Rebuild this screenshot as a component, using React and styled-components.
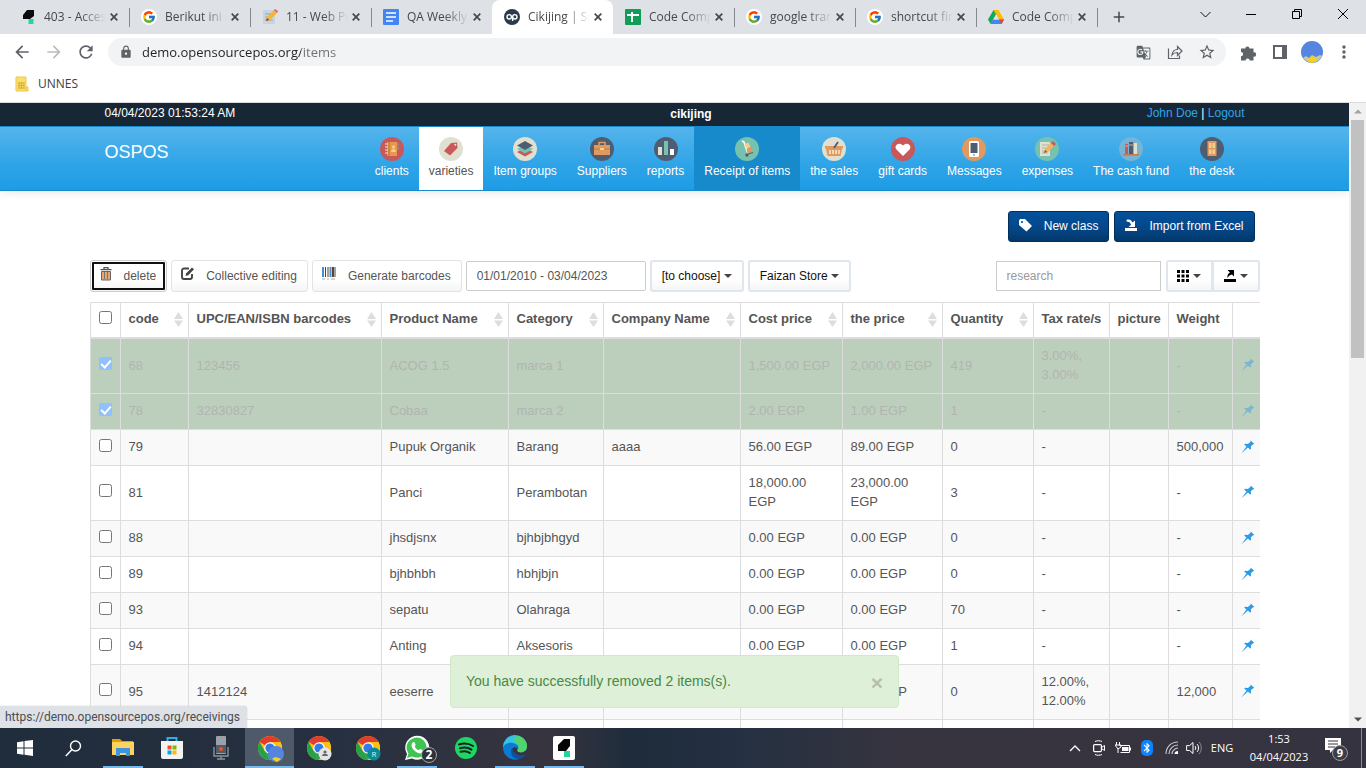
import React from "react";
import styled, { createGlobalStyle, css } from "styled-components";
import { FcGoogle } from "react-icons/fc";
import { FaWhatsapp } from "react-icons/fa";
import {
  MdArrowBack, MdArrowForward, MdRefresh, MdLock, MdGTranslate, MdStarBorder,
  MdExtension, MdMoreVert, MdAdd, MdBluetooth,
} from "react-icons/md";

const GlobalStyle = createGlobalStyle`
  * { box-sizing: border-box; }
  body { margin: 0; background: #fff; font-family: "Liberation Sans", Arial, sans-serif; font-size: 13px; line-height: 19px; color: #555; }
  button, input, select { font: inherit; color: inherit; margin: 0; }
  button { cursor: pointer; }
  svg { display: block; flex: none; }
`;

const uiFont = css`font-family: "Open Sans", "Noto Sans", sans-serif;`;

const Screen = styled.div`
  display: flex;
  flex-direction: column;
  height: 100vh;
  overflow: hidden;
`;

/* ---------- browser ---------- */
const TabStrip = styled.div`
  ${uiFont}
  display: flex;
  align-items: stretch;
  height: 34px;
  flex: none;
  padding-left: 8px;
  background: #dee1e6;
  font-size: 12px;
  line-height: 16px;
  color: #45494d;
`;
const Tab = styled.div`
  position: relative;
  display: flex;
  align-items: center;
  width: 121px;
  padding: 0 7px 0 12px;
  background: ${(p) => (p.$active ? "#fff" : "transparent")};
  border-radius: 8px 8px 0 0;
  &::after {
    content: "";
    position: absolute;
    right: -1px;
    top: 8px;
    width: 1px;
    height: 19px;
    background: ${(p) => (p.$line ? "#85888d" : "transparent")};
  }
`;
const TabTitle = styled.button`
  display: flex;
  align-items: center;
  gap: 8px;
  flex: 1;
  min-width: 0;
  padding: 0;
  border: 0;
  background: none;
  text-align: left;
`;
const TabText = styled.span`
  flex: 1;
  overflow: hidden;
  white-space: nowrap;
  mask-image: linear-gradient(to right, #000 60%, transparent);
`;
const GhostButton = styled.button`
  display: flex;
  align-items: center;
  justify-content: center;
  width: ${(p) => p.$w || 16}px;
  height: ${(p) => p.$h || 16}px;
  flex: none;
  padding: 0;
  border: 0;
  background: none;
  color: ${(p) => p.$color || "#45494d"};
`;
const WindowButtons = styled.div`
  display: flex;
  align-items: center;
  margin-left: auto;
  height: 28px;
`;
const Toolbar = styled.div`
  display: flex;
  align-items: center;
  height: 36px;
  flex: none;
  padding: 0 2px 0 6px;
`;
const Omnibox = styled.div`
  display: flex;
  align-items: center;
  flex: 1;
  height: 28px;
  margin: 0 10px 0 6px;
  padding: 0 3px 0 11px;
  border-radius: 14px;
  background: #f1f3f4;
  color: #5f6368;
`;
const Address = styled.input`
  ${uiFont}
  flex: 1;
  min-width: 0;
  margin-left: 9px;
  padding: 0;
  border: 0;
  outline: 0;
  font-size: 13px;
  color: #202124;
  background: linear-gradient(to right, #202124 159px, #6c7075 159px);
  background-clip: text;
  -webkit-text-fill-color: transparent;
`;
const Bookmarks = styled.div`
  ${uiFont}
  display: flex;
  align-items: center;
  height: 33px;
  flex: none;
  padding: 0 14px 5px;
  border-bottom: 1px solid #dadce0;
  font-size: 12px;
`;
const Bookmark = styled.a`
  display: flex;
  align-items: center;
  gap: 8px;
  color: #3c4043;
  text-decoration: none;
`;
const Viewport = styled.div`
  position: relative;
  display: flex;
  flex: 1;
  min-height: 0;
  overflow: hidden;
`;
const Scrollbar = styled.div`
  display: flex;
  flex-direction: column;
  align-items: center;
  width: 17px;
  flex: none;
  background: #f1f1f1;
`;
const Thumb = styled.div`
  width: 13px;
  flex: 0 0 38%;
  margin-bottom: auto;
  background: #c1c1c1;
`;
const StatusBubble = styled.div`
  font-family: Roboto, "Open Sans", sans-serif;
  position: absolute;
  left: 0;
  bottom: 0;
  padding: 1px 7px 1px 5px;
  height: 22px;
  border-radius: 0 4px 0 0;
  background: #dee1e6;
  font-size: 12px;
  line-height: 20px;
  color: #4a4d51;
  box-shadow: 0 0 1px #9a9da1;
`;

/* ---------- site ---------- */
const Page = styled.div`
  flex: 1;
  min-width: 0;
  overflow: hidden;
`;
const Container = styled.div`
  display: flex;
  justify-content: space-between;
  max-width: 1170px;
  margin: 0 auto;
  padding: 0 15px;
`;
const TopBar = styled.div`
  height: 23px;
  background: #182736;
  color: #fff;
  font-size: 12px;
  line-height: 20px;
  strong { line-height: 22px; }
  a { color: #2fa4e7; text-decoration: none; }
`;
const NavBar = styled.header`
  border: 1px solid #178acc;
  border-width: 1px 0;
  background: linear-gradient(#54b4eb, #2fa4e7 60%, #1d9ce5);
  box-shadow: 0 1px 10px rgba(0, 0, 0, 0.1);
`;
const Brand = styled.a`
  color: #fff;
  font-size: 18px;
  line-height: 50px;
  text-decoration: none;
`;
const Nav = styled.nav`display: flex;`;
const NavItem = styled.a`
  display: flex;
  flex-direction: column;
  align-items: center;
  gap: 1px;
  padding: 10px 10px 9px;
  font-size: 12px;
  text-decoration: none;
  white-space: nowrap;
  color: ${(p) => (p.$state === "active" ? "#555" : "#fff")};
  background: ${(p) => ({ active: "#fff", hover: "#178acc" }[p.$state] || "transparent")};
`;
const Main = styled.main`
  max-width: 1170px;
  margin: 0 auto;
  padding-top: 20px;
`;
const Actions = styled.div`
  display: flex;
  justify-content: flex-end;
  gap: 5px;
  padding-right: 5px;
`;
const PrimaryButton = styled.button`
  display: flex;
  align-items: center;
  gap: 12px;
  height: 31px;
  padding: 0 10px;
  border: 1px solid #022f5a;
  border-radius: 3px;
  background: linear-gradient(#04519b, #044687 60%, #033769);
  color: #fff;
  font-size: 12px;
  svg { margin-bottom: 3px; }
`;
const Tools = styled.div`
  display: flex;
  align-items: center;
  gap: 4px;
  margin: 18px 0 10px;
`;
const button = css`
  display: flex;
  align-items: center;
  height: 32px;
  border: 1px solid #e1e3e5;
  border-radius: 3px;
  background: linear-gradient(#fff, #fff 60%, #f5f5f5);
  font-size: 12px;
  white-space: nowrap;
`;
const ToolButton = styled.button`
  ${button}
  gap: 12px;
  padding: 0 10px 0 9px;
  svg { margin-bottom: 5px; }
  ${(p) => p.$focused && css`
    border-color: #ccc;
    outline: 2px solid #101010;
    outline-offset: -4px;
  `}
`;
const TextField = styled.input`
  width: ${(p) => p.$w}px;
  height: 30px;
  padding: 0 10px;
  border: 1px solid #ccc;
  border-radius: ${(p) => p.$radius}px;
  background: #fff;
  font-size: 12px;
  outline: 0;
  &::placeholder { color: #999; }
`;
const Picker = styled.label`
  position: relative;
  svg { position: absolute; right: 12px; top: 14px; pointer-events: none; }
`;
const Select = styled.select`
  ${button}
  width: ${(p) => p.$w}px;
  padding: 0 11px 0 10px;
  border: 2px solid #dfe6ee;
  color: #111;
  appearance: none;
`;
const Spacer = styled.div`flex: 1;`;
const ButtonGroup = styled.div`
  display: flex;
  margin-left: 1px;
`;
const IconMenuButton = styled.button`
  ${button}
  justify-content: center;
  gap: 4px;
  width: 47px;
  padding: 0;
  border: 2px solid #dfe6ee;
  color: #000;
  border-radius: 3px 0 0 3px;
  & + & { margin-left: -1px; width: 48px; border-radius: 0 3px 3px 0; }
`;
const TableClip = styled.div`overflow: hidden;`;
const Table = styled.table`
  table-layout: fixed;
  width: 1180px;
  border-collapse: separate;
  border-spacing: 0;
  border-top: 1px solid #ddd;
  text-align: left;
`;
const HeadCell = styled.th`
  padding: 6px 7px 9px 8px;
  border-left: 1px solid #ddd;
  border-bottom: 2px solid #ddd;
  white-space: nowrap;
`;
const HeadInner = styled.div`
  display: flex;
  align-items: center;
  justify-content: space-between;
  margin-right: -2px;
  svg { margin-top: 2px; }
`;
const Row = styled.tr`
  background: #fff;
  &:nth-child(odd) { background: #f9f9f9; }
  ${(p) => p.$removed && css`
    &, &:nth-child(odd) { background: #bccfbc; color: #b1b4b1; }
    svg { opacity: 0.45; }
  `}
`;
const Cell = styled.td`
  padding: 7px 7px 9px 8px;
  border-left: 1px solid #ddd;
  border-bottom: 1px solid #ddd;
  vertical-align: middle;
`;
const Check = styled.input`
  display: block;
  width: 13px;
  height: 13px;
  margin: 0 0 3px;
  ${(p) => p.$faded && css`
    appearance: none;
    border-radius: 2px;
    background: #8fc1ff;
    &::after {
      content: "";
      display: block;
      width: 4px;
      height: 8px;
      margin: 1px 0 0 4px;
      border: solid #fff;
      border-width: 0 2px 2px 0;
      transform: rotate(42deg);
    }
  `}
`;
const Toast = styled.div`
  position: absolute;
  left: 450px;
  bottom: 20px;
  display: flex;
  align-items: center;
  justify-content: space-between;
  width: 449px;
  height: 53px;
  padding: 0 15px;
  border: 1px solid #d0e9c6;
  border-radius: 4px;
  background: #dff0d8;
  color: #468847;
  font-size: 14px;
`;
const ToastClose = styled.button`
  padding: 2px 0 0;
  border: 0;
  background: none;
  color: #b2c0ad;
  font-size: 21px;
  font-weight: bold;
`;

/* ---------- taskbar ---------- */
const Taskbar = styled.footer`
  ${uiFont}
  display: flex;
  align-items: stretch;
  height: 40px;
  flex: none;
  background: linear-gradient(to right, #202d3c, #273040 25%, #37343f 40%, #1f2c3c 46%, #243041 54%, #37343f 66%, #353340);
  color: #fff;
  font-size: 12px;
  line-height: 18px;
`;
const TaskButton = styled.button`
  display: flex;
  align-items: center;
  justify-content: center;
  width: 49px;
  padding: 0;
  border: 0;
  background: ${(p) => (p.$active ? "#4e5a6a" : "none")};
  box-shadow: ${(p) => (p.$active ? "inset 0 -2px #76b9ed" : "none")};
  ${(p) => p.$open && css`
    background: linear-gradient(#76b9ed, #76b9ed) center bottom / 40px 2px no-repeat;
  `}
  svg { overflow: visible; }
`;
const Tray = styled.div`
  display: flex;
  align-items: center;
  margin-left: auto;
  padding-right: 4px;
`;
const Clock = styled.time`
  width: 74px;
  margin: 0 5px 0 2px;
  text-align: center;
  font-size: 11px;
`;
const Language = styled.span`
  width: 36px;
  text-align: center;
  font-size: 11px;
`;
const DesktopEdge = styled.div`
  align-self: stretch;
  width: 1px;
  margin-left: 8px;
  background: #8a8993;
`;

/* ---------- small drawings ---------- */
const Svg = ({ w = 16, h = w, box = `0 0 ${w} ${h}`, children, ...rest }) => (
  <svg width={w} height={h} viewBox={box} fill="none" aria-hidden="true" {...rest}>{children}</svg>
);
const Caret = () => <Svg w={8} h={4}><path d="M0 0h8L4 4z" fill="#444" /></Svg>;
const Sort = () => <Svg w={9} h={15}><path d="M0 7l4.500-7L9 7zM0 8.500h9L4.500 15z" fill="#ddd" /></Svg>;
const PathMark = () => (
  <Svg><path d="M7 1h7v6l-4 3H3V6z" fill="#0b0b0b" /><path d="M8.500 10h5v5h-5z" fill="#21d79c" /></Svg>
);
const GoogleMark = () => <Svg><circle cx="8" cy="8" r="8" fill="#fff" /><FcGoogle x="1" y="1" width="14" height="14" size={14} /></Svg>;
const MemoMark = () => (
  <Svg><path d="M1 1h12v14H1z" fill="#c5d5e2" /><path d="M3 5h7M3 8h5M3 11h8" stroke="#91a9bb" />
    <path d="M4 12l1-4 7-7 3 3-7 7z" fill="#f8b534" /><path d="M12 1l1-1 3 2-1 2z" fill="#e35d6a" /><path d="M4 12l1-3 2 2z" fill="#634a2e" /></Svg>
);
const DocsMark = () => <Svg><rect width="16" height="16" rx="1" fill="#4285f4" /><path d="M3 4h10M3 8h10M3 12h7" stroke="#fff" strokeWidth="1.600" /></Svg>;
const OpMark = () => (
  <Svg><circle cx="8" cy="8" r="8" fill="#2a3b4f" /><circle cx="5.200" cy="7.800" r="2.200" stroke="#fff" strokeWidth="1.400" />
    <circle cx="10.800" cy="7.800" r="2.200" stroke="#fff" strokeWidth="1.400" /><path d="M8.600 7.500V12" stroke="#fff" strokeWidth="1.400" /></Svg>
);
const SheetsMark = () => <Svg><rect width="16" height="16" rx="1" fill="#0f9d58" /><path d="M2 6h12M7 3v10" stroke="#fff" strokeWidth="2" /></Svg>;
const DriveMark = () => (
  <Svg><path d="M5.500 1h5L5 11l-2.500 4L0 10.500z" fill="#12a85d" /><path d="M5.500 1h5L16 10.500h-5z" fill="#fbbc04" />
    <path d="M5 10.500h11L13.500 15h-11z" fill="#4285f4" /><path d="M11 10.500h5L13.500 15z" fill="#ea4335" /><path d="M8 5.500l2.800 5H5.200z" fill="#dee1e6" /></Svg>
);
const CloseMark = () => <Svg w={8}><path d="M.700.700l6.600 6.600M7.300.700L.700 7.300" stroke="#45494d" strokeWidth="1.700" /></Svg>;
const Avatar = ({ w = 22 }) => (
  <Svg w={w} box="0 0 22 22"><circle cx="11" cy="11" r="11" fill="#5585df" />
    <path d="M2 17l3-2 3 2 3-3 4 2 4-2 2 1a11 11 0 0 1-18 3z" fill="#c9c8a2" /><path d="M7 18l4-3 4 2 1 3-5 2-4-1z" fill="#f4d11d" /></Svg>
);
const Chrome = ({ children }) => (
  <Svg w={24}><circle cx="12" cy="12" r="12" fill="#fbc117" /><path d="M12 12L1.600 6A12 12 0 0 1 22.400 6H12z" fill="#e33b2e" />
    <path d="M1.600 6L7 15.500l5 8.500A12 12 0 0 1 1.600 6z" fill="#25a04b" /><path d="M12 24l5.500-9L12 12l-5 3.500z" fill="#25a04b" />
    <path d="M22.400 6H12l5.500 9L12 24A12 12 0 0 0 22.400 6z" fill="#fbc117" /><circle cx="12" cy="12" r="5.800" fill="#fff" /><circle cx="12" cy="12" r="4.600" fill="#3679e8" />
    {children}</Svg>
);

const Tag = () => <Svg w={13}><path d="M0 1.500L1 0h5l7 7-5.500 5.500L0 6z" fill="#fff" /><circle cx="3" cy="3" r="1.100" fill="#044f97" /></Svg>;
const Import = () => <Svg w={12} h={13}><path d="M0 9h12v3H0z" fill="#fff" /><path d="M1.500 1C4 0 6.500 1 7.500 3.500L10 1.500V8H3.500L6 5.700C5.300 3.500 4 2.500 1.500 2.500z" fill="#fff" /></Svg>;
const Export = () => <Svg w={12} h={13}><path d="M0 9h12v3H0z" fill="#000" /><path d="M3.500 0H10v6.500L8 4.600C6 5 5 6 3.500 8c-.500-2.500.700-4.500 2.500-5.400z" fill="#000" /></Svg>;
const Trash = () => (
  <Svg w={12} h={14}><path d="M4 2V.7h4V2M.500 2.700h11" stroke="#555" strokeWidth="1.300" /><path d="M1.500 4.500h9V13h-9z" fill="#e7a66f" stroke="#666" /><path d="M4.500 5v7M7.500 5v7" stroke="#777" /></Svg>
);
const Edit = () => (
  <Svg w={13} h={13}><path d="M8 1.500H3A2 2 0 0 0 1 3.500V10a2 2 0 0 0 2 2h6a2 2 0 0 0 2-2V7" stroke="#444" strokeWidth="1.900" /><path d="M4.500 9l.7-2.800L11 .5 13 2.300 7.300 8.200z" fill="#444" /></Svg>
);
const Barcode = () => (
  <Svg w={14} h={13}><path d="M1 0v10M8.500 0v10" stroke="#4a8fc9" strokeWidth="2" /><path d="M3.500 0v10M13 0v10M6 0v10" stroke="#4d4440" /><path d="M11 0v10" stroke="#5a4632" strokeWidth="2" /><path d="M0 12h3M5 12h2M9 12h4" stroke="#aaa" /></Svg>
);
const Grid = () => <Svg w={12} h={12}><path d="M0 0h3v3H0zM4.500 0h3v3h-3zM9 0h3v3H9zM0 4.500h3v3H0zM4.500 4.500h3v3h-3zM9 4.500h3v3H9zM0 9h3v3H0zM4.500 9h3v3h-3zM9 9h3v3H9z" fill="#000" /></Svg>;
const Pin = () => (
  <Svg w={14} h={14}><path d="M9.600.600L13.400 4l-1.200.300-2.400 2 .300 2.600-.900.700-2.300-2L.300 13.600 5.500 6.500 3.200 4.600l.900-.800 2.800.200 2.700-2.300z" fill="#2a9be6" /></Svg>
);

const badge = {
  clients: ["#c9585b", <><path d="M7 5h10v14H7z" fill="#e6994f" /><path d="M9 5v14" stroke="#b76c35" /><circle cx="13.500" cy="10" r="1.600" fill="#f6cf86" /><path d="M11 15c0-4 5-4 5 0z" fill="#f6cf86" /><path d="M5 7h3M5 10h3M5 13h3M5 16h3" stroke="#f0e6cf" /><path d="M18 6v3M18 10v3" stroke="#62b5a2" /></>],
  varieties: ["#e0e0d1", <><path d="M5 14l7-8 6-.5.500 5.500-7.500 7.500z" fill="#c9585b" /><circle cx="16.300" cy="7.700" r="1" fill="#f4e9e3" /></>],
  groups: ["#e0e0d1", <><path d="M4 15l8 4.500 8-4.500-3-1.500H7z" fill="#c9585b" /><path d="M4 12l8 4.500 8-4.500-3-1.500H7z" fill="#76c2af" /><path d="M4 8.500L12 4l8 4.500-8 4.500z" fill="#4f5d73" /></>],
  suppliers: ["#4f5d73", <><path d="M9 8V5.500h6V8" stroke="#e0995e" strokeWidth="1.600" /><path d="M4 8h16v10H4z" fill="#e0995e" /><path d="M4 12h16" stroke="#c47b43" /><path d="M10 11h4v2h-4z" fill="#f5cf87" /></>],
  reports: ["#4f5d73", <><path d="M4 10h4v8H4z" fill="#e0e0d1" /><path d="M10 4h4v14h-4z" fill="#76c2af" /><path d="M16 12h4v6h-4z" fill="#fff" /></>],
  receipt: ["#76c2af", <><path d="M7 4l2 1 4 12" stroke="#fff" strokeWidth="1.600" /><path d="M9.500 7l4-1.500 2 4.500-4 1.500z" fill="#f5cf87" /><path d="M11.500 12l5-1.500 1.500 4-5.500 2z" fill="#e0995e" /><path d="M13 17l5-1.500" stroke="#4f5d73" /><circle cx="12" cy="18" r="1.700" fill="#4f5d73" /></>],
  sales: ["#e0e0d1", <><path d="M3 9h18v2l-1 1-1.500 7h-13L4 12l-1-1z" fill="#e0995e" /><path d="M8 13v4M11 13v4M14 13v4M17 13v4" stroke="#fff2df" strokeWidth="1.400" /><path d="M12 11l4-6" stroke="#4f5d73" strokeWidth="1.800" /></>],
  gift: ["#c9585b", <path d="M12 19L5.500 12.500C2.500 9 7.500 4 12 8.500 16.500 4 21.500 9 18.500 12.500z" fill="#fff" />],
  messages: ["#e0995e", <><rect x="7" y="4" width="10" height="16" rx="1.500" fill="#fff" /><path d="M8.500 6h7v10h-7z" fill="#4f5d73" /><circle cx="12" cy="18" r=".9" fill="#999" /></>],
  expenses: ["#76c2af", <><path d="M5 5h10v14H5z" fill="#e0e0d1" /><path d="M7 8h7M7 11h4M7 14h2M7 16h6" stroke="#aeb3a5" /><path d="M9 16l1-4 7-7 3 3-7 7z" fill="#f5b25e" /><path d="M16 6l2-2 3 3-2 2z" fill="#c9585b" /><path d="M9 16l1-3 2 2z" fill="#4f5d73" /></>],
  fund: ["#77b3d4", <><path d="M6 7h3v10H6z" fill="#c9585b" /><path d="M10 5h4v12h-4z" fill="#4f5d73" /><path d="M15 6h3v11h-3z" fill="#e0e0d1" /><path d="M6 9h3M10 8h4" stroke="#e7a66f" /><path d="M4 17h16v1.500H4z" fill="#c47b43" /></>],
  desk: ["#4f5d73", <><path d="M7.500 4h9v15h-9z" fill="#e0995e" /><path d="M9 6h2.500v5H9zM12.500 6H15v5h-2.500zM9 12.500h2.500V17H9zM12.500 12.500H15V17h-2.500z" fill="#f5cf87" /></>],
};
const Badge = ({ name }) => <Svg w={24}><circle cx="12" cy="12" r="12" fill={badge[name][0]} />{badge[name][1]}</Svg>;

/* ---------- data ---------- */
const tabs = [
  [PathMark, "403 - Access Denied"], [GoogleMark, "Berikut ini adalah"], [MemoMark, "11 - Web Project"],
  [DocsMark, "QA Weekly Report"], [OpMark, "Cikijing | Supported", true], [SheetsMark, "Code Competition"],
  [GoogleMark, "google translate"], [GoogleMark, "shortcut firefox"], [DriveMark, "Code Competition"],
];
const nav = [
  ["clients", "clients"], ["varieties", "varieties", "active"], ["groups", "Item groups"], ["suppliers", "Suppliers"],
  ["reports", "reports"], ["receipt", "Receipt of items", "hover"], ["sales", "the sales"], ["gift", "gift cards"],
  ["messages", "Messages"], ["expenses", "expenses"], ["fund", "The cash fund"], ["desk", "the desk"],
];
const columns = [
  ["code", 68, 1], ["UPC/EAN/ISBN barcodes", 193, 1], ["Product Name", 127, 1], ["Category", 95, 1],
  ["Company Name", 137, 1], ["Cost price", 102, 1], ["the price", 100, 1], ["Quantity", 91, 1],
  ["Tax rate/s", 76], ["picture", 59], ["Weight", 64],
];
const rows = [
  ["68", "123456", "ACOG 1.5", "marca 1", "", "1,500.00 EGP", "2,000.00 EGP", "419", "3.00%, 3.00%", "", "-"],
  ["78", "32830827", "Cobaa", "marca 2", "", "2.00 EGP", "1.00 EGP", "1", "-", "", "-"],
  ["79", "", "Pupuk Organik", "Barang", "aaaa", "56.00 EGP", "89.00 EGP", "0", "-", "", "500,000"],
  ["81", "", "Panci", "Perambotan", "", "18,000.00 EGP", "23,000.00 EGP", "3", "-", "", "-"],
  ["88", "", "jhsdjsnx", "bjhbjbhgyd", "", "0.00 EGP", "0.00 EGP", "0", "-", "", "-"],
  ["89", "", "bjhbhbh", "hbhjbjn", "", "0.00 EGP", "0.00 EGP", "0", "-", "", "-"],
  ["93", "", "sepatu", "Olahraga", "", "0.00 EGP", "0.00 EGP", "70", "-", "", "-"],
  ["94", "", "Anting", "Aksesoris", "", "0.00 EGP", "0.00 EGP", "1", "-", "", "-"],
  ["95", "1412124", "eeserre", "", "", "", "0.00 EGP", "0", "12.00%, 12.00%", "", "12,000"],
  ["", "", "", "", "", "", "", "", "", "", ""],
];

const Browser = () => (
  <>
    <TabStrip role="tablist">
      {tabs.map(([Icon, title, active], i) => (
        <Tab key={i} $active={active} $line={!active && !(tabs[i + 1] && tabs[i + 1][2]) && !(tabs[i - 1] && tabs[i - 1][2] && false)}>
          <TabTitle role="tab" aria-selected={!!active}><Icon /><TabText>{title}</TabText></TabTitle>
          <GhostButton aria-label="Close tab"><CloseMark /></GhostButton>
        </Tab>
      ))}
      <GhostButton $w={44} $h={34} aria-label="New tab"><MdAdd size={18} /></GhostButton>
      <WindowButtons>
        <GhostButton $w={46} aria-label="Search tabs"><Svg w={11}><path d="M.500 3l5 5 5-5" stroke="#111" /></Svg></GhostButton>
        <GhostButton $w={46} aria-label="Minimize"><Svg w={10}><path d="M0 5.500h10" stroke="#000" /></Svg></GhostButton>
        <GhostButton $w={46} aria-label="Restore"><Svg w={10}><path d="M.500 2.500h7v7h-7zM2.500 2.500v-2h7v7h-2" stroke="#000" /></Svg></GhostButton>
        <GhostButton $w={46} aria-label="Close"><Svg w={10}><path d="M0 0l10 10M10 0L0 10" stroke="#000" /></Svg></GhostButton>
      </WindowButtons>
    </TabStrip>
    <Toolbar>
      <GhostButton $w={32} $h={28} $color="#5f6368" aria-label="Back"><MdArrowBack size={20} /></GhostButton>
      <GhostButton $w={32} $h={28} $color="#babcbe" aria-label="Forward"><MdArrowForward size={20} /></GhostButton>
      <GhostButton $w={32} $h={28} $color="#5f6368" aria-label="Reload"><MdRefresh size={20} /></GhostButton>
      <Omnibox>
        <MdLock size={14} />
        <Address aria-label="Address" defaultValue="demo.opensourcepos.org/items" />
        <GhostButton $w={32} $color="#5f6368" aria-label="Translate"><MdGTranslate size={15} /></GhostButton>
        <GhostButton $w={32} $color="#5f6368" aria-label="Share">
          <Svg w={16}><path d="M1.500 4.500v10h11v-3M5 11c.5-4 3-5.500 5.500-5.500V2.500L15 7l-4.500 4.500v-3C8 8.500 6.500 9 5 11z" stroke="#5f6368" strokeWidth="1.200" /></Svg>
        </GhostButton>
        <GhostButton $w={32} $color="#5f6368" aria-label="Bookmark"><MdStarBorder size={18} /></GhostButton>
      </Omnibox>
      <GhostButton $w={24} $h={28} aria-label="Extensions">
        <Svg w={17}><path d="M1 4.500h4.300a2.100 2.100 0 1 1 4.200 0H13.500V8.300a2.200 2.200 0 1 1 0 4.300V16.500H9.700a2.100 2.100 0 0 0-4.200 0H1V12.300a2.100 2.100 0 0 0 0-4.200z" fill="#5f6368" /></Svg>
      </GhostButton>
      <GhostButton $w={40} $h={28} aria-label="Side panel">
        <Svg w={14}><path d="M1 1h12v12H1z" stroke="#5f6368" strokeWidth="2" /><path d="M9 0h5v14H9z" fill="#5f6368" /></Svg>
      </GhostButton>
      <GhostButton $w={24} $h={28} aria-label="Profile"><Avatar /></GhostButton>
      <GhostButton $w={40} $h={28} $color="#5f6368" aria-label="Menu"><MdMoreVert size={20} /></GhostButton>
    </Toolbar>
    <Bookmarks>
      <Bookmark href="#unnes">
        <Svg><path d="M2 1h10v14H2z" fill="#f9dc72" stroke="#efc94a" /><path d="M12 11h2v4h-2z" fill="#f9dc72" stroke="#efc94a" /><path d="M4 7h6M4 9.500h6M4 12h6M5 6v7M7.500 6v7M10 6v7" stroke="#dfae28" /></Svg>
        UNNES
      </Bookmark>
    </Bookmarks>
  </>
);

const ItemsTable = () => (
  <TableClip>
    <Table>
      <colgroup>
        <col style={{ width: 30 }} />
        {columns.map(([name, w]) => <col key={name} style={{ width: w }} />)}
        <col />
      </colgroup>
      <thead>
        <tr>
          <HeadCell><Check type="checkbox" aria-label="Select all" /></HeadCell>
          {columns.map(([name, , sortable]) => (
            <HeadCell key={name}><HeadInner>{name}{sortable && <Sort />}</HeadInner></HeadCell>
          ))}
          <HeadCell aria-label="Edit" />
        </tr>
      </thead>
      <tbody>
        {rows.map((cells, r) => (
          <Row key={r} $removed={r < 2}>
            <Cell><Check type="checkbox" aria-label={`Select ${cells[0]}`} defaultChecked={r < 2} $faded={r < 2} /></Cell>
            {cells.map((text, c) => <Cell key={c}>{text}</Cell>)}
            <Cell><Pin /></Cell>
          </Row>
        ))}
      </tbody>
    </Table>
  </TableClip>
);

const Windows = () => <Svg w={16}><path d="M0 2.200l6.500-.9v6.200H0zM7.500 1.100L16 0v7.500H7.500zM0 8.500h6.500v6.200L0 13.800zM7.500 8.500H16V16l-8.500-1.200z" fill="#fff" /></Svg>;
const Search = () => <Svg w={17}><circle cx="10.500" cy="6" r="5" stroke="#fff" strokeWidth="1.400" /><path d="M7 9.500L.800 16" stroke="#fff" strokeWidth="1.500" /></Svg>;
const Folder = () => (
  <Svg w={22} h={20}><path d="M0 1h8l2 2h11v4H0z" fill="#e0a000" /><path d="M0 4h22v13H0z" fill="#fdd25f" /><path d="M4 12h14v6h-4v-3H8v3H4z" fill="#3d95dd" /><path d="M4 10h14v3H4z" fill="#3d95dd" /></Svg>
);
const Store = () => (
  <Svg w={24}><path d="M7.500 6V2h9v4" stroke="#29b0e8" strokeWidth="2" /><path d="M1 5h22v16a2 2 0 0 1-2 2H3a2 2 0 0 1-2-2z" fill="#f3f3f3" />
    <path d="M7.500 9.500h4v4h-4z" fill="#f25022" /><path d="M12.500 9.500h4v4h-4z" fill="#7fba00" /><path d="M7.500 14.500h4v4h-4z" fill="#00a4ef" /><path d="M12.500 14.500h4v4h-4z" fill="#ffb900" /></Svg>
);
const Mic = () => (
  <Svg w={16} h={24}><rect x="3" y="0" width="10" height="18" rx="1" fill="#9aa1aa" /><path d="M3 9h10v8H3z" fill="#525b66" /><circle cx="8" cy="13" r="2" fill="#f0551f" /><path d="M1 11v9h14v-9M8 20v3M4 23h8" stroke="#8b929b" strokeWidth="1.400" /></Svg>
);
const WhatsApp = () => (
  <Svg w={24}><path d="M0 24l2-6a12 12 0 1 1 5 4.500z" fill="#fff" /><path d="M2 22l1.500-4.500a10 10 0 1 1 3.500 3z" fill="#3fc351" />
    <path d="M7.500 6.500c1-1 2-.5 2.300.3l.8 2c.2.700-1 1.400-.8 2 .8 1.500 2 2.600 3.600 3.300.700.200 1.300-1.200 2-1l2.200 1.100c1 .600-.2 3-2.100 3.200-3 .300-8.500-3.500-9-7.800 0-1.300.400-2.300 1-3.100z" fill="#fff" />
    <circle cx="24" cy="19" r="7.500" fill="#2e3138" stroke="#a3a5a9" /><text x="24" y="23" fill="#fff" fontSize="12" fontWeight="bold" textAnchor="middle">2</text></Svg>
);
const Spotify = () => (
  <Svg w={22}><circle cx="11" cy="11" r="11" fill="#1ed760" /><path d="M4 7.500c5-1.500 10-1 14 1.500M5 11.300c4-1.200 8-.8 11.500 1.300M5.500 14.800c3.500-.9 7-.6 9.500 1.200" stroke="#15212a" strokeWidth="2" strokeLinecap="round" /></Svg>
);
const Edge = () => (
  <Svg w={24}><path d="M0 12A12 12 0 0 1 24 10c0 5-4 7-8 6-2-.6-2-2-.8-3.500C16 9 12 7.500 8.500 8 4 8.300 1 10 0 12z" fill="#35c1e8" />
    <path d="M13 0c7 0 11 5 11 10s-4 7-8 6c-2-.6-2-2-.8-3.500C17 8 13 6 10 5z" fill="#53d36c" /><path d="M0 12c1-4 6-6 10-5 4 .8 6 4 5 6-4-4-8 0-5.500 5 2 4 7 4 11 2A12 12 0 0 1 0 12z" fill="#0b7ad4" />
    <path d="M9 12c-3 5 1 12 8 10.800 3-1 5-3.500 5.500-4.800-5 3-11 1-13.500-6z" fill="#124f9d" /></Svg>
);
const PathApp = () => <Svg w={24}><rect x="1" width="22" height="24" rx="2" fill="#fff" /><path d="M12 3h6v7l-4 5H6V9z" fill="#050505" /><path d="M12 15h6v6h-6z" fill="#21d79c" /></Svg>;

const apps = [
  ["Start", <Windows />], ["Search", <Search />], ["File Explorer", <Folder />, "open"], ["Store", <Store />], ["Recorder", <Mic />],
  ["Chrome", <Chrome><circle cx="18" cy="18" r="8" fill="#5585df" /><path d="M14 23l3-2 4 1 2 1-4 3z" fill="#f4d11d" /></Chrome>, "active"],
  ["Chrome guest", <Chrome><circle cx="18" cy="18" r="6.500" fill="#e3e5e9" /><circle cx="18" cy="16" r="1.600" fill="#63676c" /><path d="M15 20c0-3 6-3 6 0z" fill="#63676c" /></Chrome>],
  ["Chrome R", <Chrome><circle cx="18" cy="18" r="6.500" fill="#0a8a94" /><text x="18" y="21" fill="#d8f2f3" fontSize="8" textAnchor="middle">R</text></Chrome>],
  ["WhatsApp", <WhatsApp />, "open"], ["Spotify", <Spotify />], ["Edge", <Edge />, "open"], ["Path", <PathApp />, "open"],
];

const SystemTray = () => (
  <Tray>
    <GhostButton $w={24} aria-label="Hidden icons"><Svg w={12} h={8}><path d="M1 7l5-5 5 5" stroke="#fff" strokeWidth="1.300" /></Svg></GhostButton>
    <GhostButton $w={24} aria-label="Meet now"><Svg w={12} h={16}><rect x=".6" y="4.600" width="7.800" height="7" rx="1" stroke="#fff" strokeWidth="1.200" /><path d="M8.500 7.500l3-2v5l-3-2M2 1.500c2-1 5-1 7 0M2 14.500c2 1 5 1 7 0" stroke="#fff" /></Svg></GhostButton>
    <GhostButton $w={24} aria-label="Battery"><Svg w={17} h={12}><path d="M4.500 3.500h10v7h-9M15.500 5.500v3" stroke="#fff" /><path d="M7 5h6.500v4H7z" fill="#fff" /><path d="M1.500 0v3M4.500 0v3M0 3h6v2L3 7zM3 7v4" stroke="#fff" /></Svg></GhostButton>
    <GhostButton $w={24} aria-label="Bluetooth"><Svg w={12} h={16}><rect width="12" height="16" rx="5" fill="#0a84ff" /><MdBluetooth x="0" y="2" size={12} color="#fff" /></Svg></GhostButton>
    <GhostButton $w={25} aria-label="Network"><Svg w={14} h={14}><path d="M1 13C1 6 6 1 13 1M4 13c0-5 4-9 9-9M7 13c0-3 3-6 6-6" stroke="#c7c7cc" strokeWidth="1.200" /><path d="M9.500 13c0-2 1.500-3 3.500-3v3z" fill="#fff" /></Svg></GhostButton>
    <GhostButton $w={20} aria-label="Volume"><Svg w={16} h={14}><path d="M.600 4.600h3L7 1.500v11L3.600 9.500h-3z" stroke="#fff" /><path d="M9 5c1 1 1 3 0 4M11 3c2 2 2 6 0 8" stroke="#fff" /><path d="M13 1c3 3 3 9 0 12" stroke="#8b8a93" /></Svg></GhostButton>
    <Language>ENG</Language>
    <Clock>1:53<br />04/04/2023</Clock>
    <GhostButton $w={32} $h={40} aria-label="Notifications">
      <Svg w={26} h={26}><path d="M1 3h16v12h-8l-3 3v-3H1z" fill="#fff" /><path d="M4 6h10M4 9h10M4 12h7" stroke="#35343f" /><circle cx="16" cy="18" r="7.500" fill="#3e3d46" stroke="#9b9aa1" /><text x="16" y="22" fill="#fff" fontSize="11" fontWeight="bold" textAnchor="middle">9</text></Svg>
    </GhostButton>
    <DesktopEdge />
  </Tray>
);

export default function App() {
  return (
    <Screen>
      <GlobalStyle />
      <Browser />
      <Viewport>
        <Page>
          <TopBar>
            <Container>
              <span>04/04/2023 01:53:24 AM</span>
              <strong>cikijing</strong>
              <span><a href="#user">John Doe</a> | <a href="#logout">Logout</a></span>
            </Container>
          </TopBar>
          <NavBar>
            <Container>
              <Brand href="#home">OSPOS</Brand>
              <Nav>
                {nav.map(([icon, label, state]) => (
                  <NavItem key={icon} href={`#${icon}`} $state={state}><Badge name={icon} />{label}</NavItem>
                ))}
              </Nav>
            </Container>
          </NavBar>
          <Main>
            <Actions>
              <PrimaryButton><Tag />New class</PrimaryButton>
              <PrimaryButton><Import />Import from Excel</PrimaryButton>
            </Actions>
            <Tools>
              <ToolButton $focused><Trash />delete</ToolButton>
              <ToolButton><Edit />Collective editing</ToolButton>
              <ToolButton><Barcode />Generate barcodes</ToolButton>
              <TextField $w={180} $radius={2} aria-label="Date range" defaultValue="01/01/2010 - 03/04/2023" />
              <Picker><Select $w={94} aria-label="Filters"><option>[to choose]</option></Select><Caret /></Picker>
              <Picker><Select $w={103} aria-label="Stock location"><option>Faizan Store</option></Select><Caret /></Picker>
              <Spacer />
              <TextField $w={165} $radius={0} aria-label="Search" placeholder="research" />
              <ButtonGroup>
                <IconMenuButton aria-label="Columns"><Grid /><Caret /></IconMenuButton>
                <IconMenuButton aria-label="Export"><Export /><Caret /></IconMenuButton>
              </ButtonGroup>
            </Tools>
            <ItemsTable />
          </Main>
        </Page>
        <Scrollbar>
          <Svg w={16} h={17}><path d="M4 10.500l4-4 4 4z" fill="#a3a3a3" /></Svg>
          <Thumb />
          <Svg w={16} h={17}><path d="M4 6.500h8l-4 4z" fill="#505050" /></Svg>
        </Scrollbar>
        <Toast role="alert">You have successfully removed 2 items(s).<ToastClose aria-label="Dismiss">×</ToastClose></Toast>
        <StatusBubble>https://demo.opensourcepos.org/receivings</StatusBubble>
      </Viewport>
      <Taskbar>
        {apps.map(([name, icon, state]) => (
          <TaskButton key={name} aria-label={name} $active={state === "active"} $open={state === "open"}>{icon}</TaskButton>
        ))}
        <SystemTray />
      </Taskbar>
    </Screen>
  );
}
